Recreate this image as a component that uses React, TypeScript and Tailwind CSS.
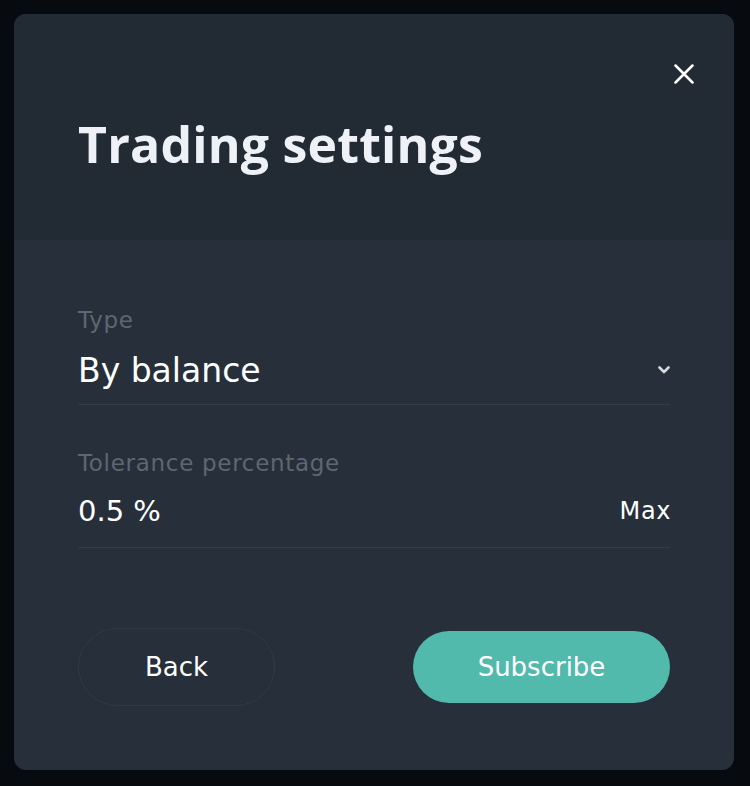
const body = { fontFamily: '"DejaVu Sans", "Noto Sans", sans-serif' };
const heading = { fontFamily: '"Open Sans", "Noto Sans", sans-serif' };

function CloseIcon() {
  return (
    <svg width="20" height="20" viewBox="0 0 20 20" fill="none">
      <path d="M1.5 1.5L18.5 18.5M18.5 1.5L1.5 18.5" stroke="white" strokeWidth="2.5" strokeLinecap="round" />
    </svg>
  );
}

function Chevron() {
  return (
    <svg width="12" height="8" viewBox="0 0 12 8" fill="none" className="mb-[3px]">
      <path d="M1.5 1.5L6 6L10.5 1.5" stroke="#d6dadf" strokeWidth="2.6" strokeLinecap="round" strokeLinejoin="round" />
    </svg>
  );
}

function Label({ children }: { children: React.ReactNode }) {
  return <div className="text-[23px] leading-[28px] tracking-[0.7px] text-[#5e6770]">{children}</div>;
}

export default function App() {
  return (
    <div className="min-h-[786px] w-[750px] bg-[#070b0f] p-[14px]" style={body}>
      <div className="h-[756px] w-[720px] overflow-hidden rounded-[12px] bg-[#262f3a]">
        {/* header */}
        <div className="relative h-[226px] bg-[#222a34] px-[64px] pt-[102px]">
          <button className="absolute right-[40px] top-[50px] flex h-[20px] w-[20px] items-center justify-center">
            <CloseIcon />
          </button>
          <h1
            className="text-[50px] font-bold leading-[56px] tracking-[0.2px] text-[#eef2f6]"
            style={heading}
          >
            Trading settings
          </h1>
        </div>

        {/* body */}
        <div className="px-[64px] pt-[66px]">
          <div className="border-b border-[#323c47] pb-[13px]">
            <Label>Type</Label>
            <div className="mt-[17px] flex h-[40px] items-center justify-between">
              <div className="text-[33px] leading-[40px] text-white">By balance</div>
              <Chevron />
            </div>
          </div>

          <div className="mt-[44px] border-b border-[#323c47] pb-[16px]">
            <Label>Tolerance percentage</Label>
            <div className="mt-[14px] flex h-[40px] items-center justify-between">
              <div className="text-[29px] leading-[40px] text-white">0.5 %</div>
              <span className="-mr-[1px] text-[24px] leading-[28px] tracking-[0.6px] text-white">Max</span>
            </div>
          </div>

          <div className="mt-[80px] flex items-center justify-between">
            <button className="h-[78px] w-[197px] rounded-full border border-[#303a45] text-[26px] text-white">
              Back
            </button>
            <button className="h-[72px] w-[257px] rounded-full bg-[#52b9ad] text-[26px] text-white">
              Subscribe
            </button>
          </div>
        </div>
      </div>
    </div>
  );
}
